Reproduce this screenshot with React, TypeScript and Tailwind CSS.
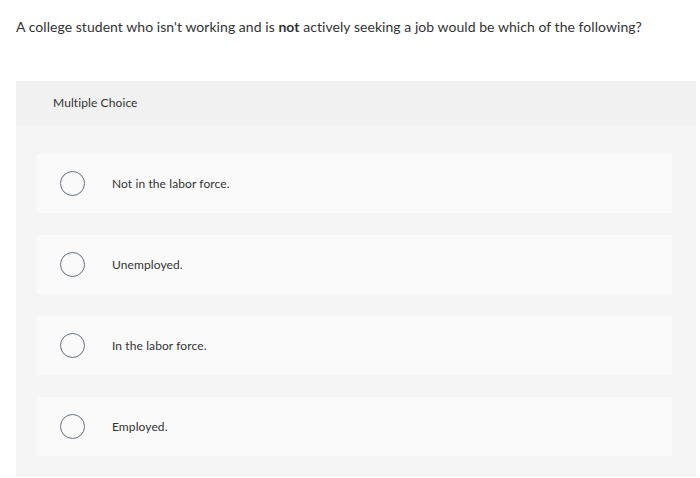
const options = [
  "Not in the labor force.",
  "Unemployed.",
  "In the labor force.",
  "Employed.",
];

export default function App() {
  return (
    <div className="h-[478px] w-[700px] overflow-hidden bg-white font-['Lato',sans-serif] text-[#333]">
      <p className="pl-4 pt-[17px] text-[14px] leading-5 tracking-[0.05px]">
        A college student who isn't working and is <b className="font-bold">not</b> actively seeking a job would be which of the following?
      </p>

      <div className="ml-4 mr-1 mt-[44px] bg-[#f5f5f5]">
        <div className="flex h-[44px] items-center bg-[#f1f1f1] pl-[37px] text-[12px] tracking-[0.1px]">Multiple Choice</div>
        <div className="flex flex-col gap-[22px] pb-[21px] pl-[21px] pr-6 pt-[29px]">
          {options.map((opt) => (
            <div key={opt} className="flex h-[59px] items-center bg-[#fafafa]">
              <span className="ml-[23px] h-[25px] w-[25px] rounded-full border-[1.5px] border-[#66717e]" />
              <span className="ml-[27px] text-[12px] tracking-[0.1px]">{opt}</span>
            </div>
          ))}
        </div>
      </div>
    </div>
  );
}
